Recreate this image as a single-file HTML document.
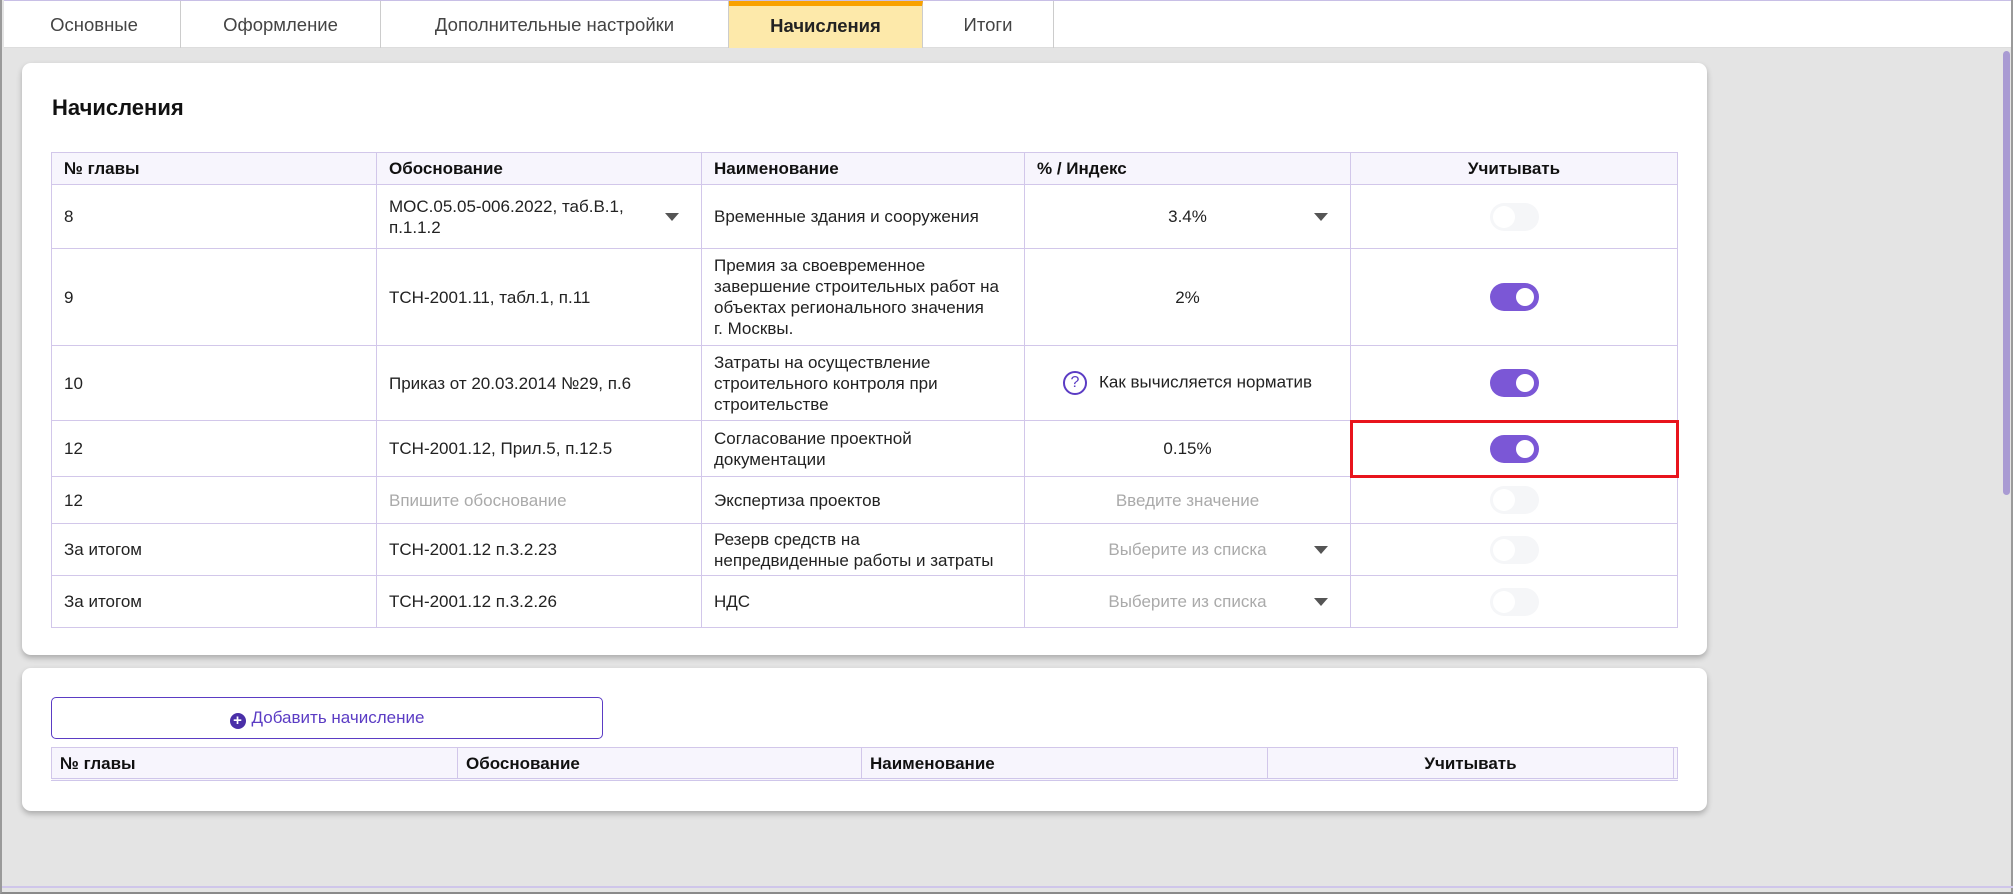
<!DOCTYPE html>
<html><head><meta charset="utf-8"><style>
*{box-sizing:border-box;margin:0;padding:0}
body{width:2013px;height:894px;background:#e4e4e4;font-family:"Liberation Sans",sans-serif;color:#222;position:relative;overflow:hidden;border-left:2px solid #9a9a9a;border-right:2px solid #9a9a9a;border-bottom:2px solid #8a8a8a}
.tabs{position:absolute;left:2px;top:0;width:2007px;height:48px;background:#fff;border-bottom:1px solid #ddd;border-top:1px solid #c8bfe6}
.tab{position:absolute;top:0;height:47px;line-height:48px;text-align:center;font-size:18.5px;color:#444;border-right:1px solid #ccc}
.tab.act{background:#fde9aa;font-weight:bold;color:#222;border-top:5px solid #f9a200;line-height:40px}
.card{position:absolute;left:20px;width:1685px;background:#fff;border-radius:9px;box-shadow:0 3px 6px rgba(0,0,0,.25)}
h2{position:absolute;left:30px;font-size:22px;font-weight:bold;color:#111}
table{position:absolute;border-collapse:collapse;table-layout:fixed;font-size:17px;line-height:21px}
td,th{border:1px solid #d2c7ea;padding:0 12px;vertical-align:middle;text-align:left}
th{background:#f7f5fd;font-weight:bold;color:#111}
.c{text-align:center}
.ph{color:#aaa}
.tg{display:inline-block;width:49px;height:28px;border-radius:14px;background:#7b57d6;position:relative;vertical-align:middle}
.tg::after{content:"";position:absolute;right:5px;top:5px;width:18px;height:18px;border-radius:50%;background:#fff}
.tg.off{background:#f5f6f8}
.tg.off::after{left:3px;right:auto;top:3px;width:22px;height:22px;background:#fff}
.dd{position:absolute;right:22px;top:50%;margin-top:-4px;border-left:7px solid transparent;border-right:7px solid transparent;border-top:8px solid #555}
.rel{position:relative}
</style></head><body>
<div class="tabs">
<div class="tab" style="left:4px;width:173px">Основные</div>
<div class="tab" style="left:177px;width:200px">Оформление</div>
<div class="tab" style="left:377px;width:348px">Дополнительные настройки</div>
<div class="tab act" style="left:725px;width:194px">Начисления</div>
<div class="tab" style="left:919px;width:131px">Итоги</div>
</div>
<div style="position:absolute;left:2001px;top:51px;width:7px;height:444px;background:#a99bd3;border-radius:4px"></div>
<div style="position:absolute;left:0;top:886px;width:2013px;height:2px;background:#cfc6ea"></div>

<div class="card" style="top:63px;height:592px">
<h2 style="top:32px">Начисления</h2>
<table style="left:29px;top:89px;width:1626px">
<colgroup><col style="width:325px"><col style="width:325px"><col style="width:323px"><col style="width:326px"><col style="width:327px"></colgroup>
<tr style="height:32px"><th>№ главы</th><th>Обоснование</th><th>Наименование</th><th>% / Индекс</th><th class="c">Учитывать</th></tr>
<tr style="height:64px"><td>8</td><td class="rel">МОС.05.05-006.2022, таб.В.1,<br>п.1.1.2<span class="dd"></span></td><td>Временные здания и сооружения</td><td class="c rel">3.4%<span class="dd"></span></td><td class="c"><span class="tg off"></span></td></tr>
<tr style="height:97px"><td>9</td><td>ТСН-2001.11, табл.1, п.11</td><td>Премия за своевременное<br>завершение строительных работ на<br>объектах регионального значения<br>г. Москвы.</td><td class="c">2%</td><td class="c"><span class="tg"></span></td></tr>
<tr style="height:75px"><td>10</td><td>Приказ от 20.03.2014 №29, п.6</td><td>Затраты на осуществление<br>строительного контроля при<br>строительстве</td><td class="c"><span style="display:inline-block;width:24px;height:24px;border:2px solid #5b3cc4;border-radius:50%;color:#5b3cc4;font-size:16px;line-height:20px;text-align:center;vertical-align:middle;margin-right:12px">?</span>Как вычисляется норматив</td><td class="c"><span class="tg"></span></td></tr>
<tr style="height:56px"><td>12</td><td>ТСН-2001.12, Прил.5, п.12.5</td><td>Согласование проектной<br>документации</td><td class="c">0.15%</td><td class="c" style="outline:3px solid #e8141c;outline-offset:-2px"><span class="tg"></span></td></tr>
<tr style="height:47px"><td>12</td><td class="ph">Впишите обоснование</td><td>Экспертиза проектов</td><td class="c ph">Введите значение</td><td class="c"><span class="tg off"></span></td></tr>
<tr style="height:52px"><td>За итогом</td><td>ТСН-2001.12 п.3.2.23</td><td>Резерв средств на<br>непредвиденные работы и затраты</td><td class="c ph rel">Выберите из списка<span class="dd"></span></td><td class="c"><span class="tg off"></span></td></tr>
<tr style="height:52px"><td>За итогом</td><td>ТСН-2001.12 п.3.2.26</td><td>НДС</td><td class="c ph rel">Выберите из списка<span class="dd"></span></td><td class="c"><span class="tg off"></span></td></tr>
</table>
</div>

<div class="card" style="top:668px;height:143px">
<div style="position:absolute;left:29px;top:29px;width:552px;height:42px;border:1.5px solid #5b3cc4;border-radius:5px;text-align:center;line-height:40px;font-size:17px;color:#5b3cc4"><span style="display:inline-block;width:16px;height:16px;border-radius:50%;background:#4a2fa8;color:#fff;font-size:15px;line-height:16px;font-weight:bold;vertical-align:-2px;margin-right:6px">+</span>Добавить начисление</div>
<table style="left:29px;top:79px;width:1626px;border-bottom:3px double #cfc6ea">
<colgroup><col style="width:406px"><col style="width:404px"><col style="width:406px"><col style="width:406px"><col style="width:4px"></colgroup>
<tr style="height:32px"><th style="padding-left:8px">№ главы</th><th style="padding-left:8px">Обоснование</th><th style="padding-left:8px">Наименование</th><th class="c">Учитывать</th><th style="padding:0"></th></tr>
</table>
</div>
</body></html>
